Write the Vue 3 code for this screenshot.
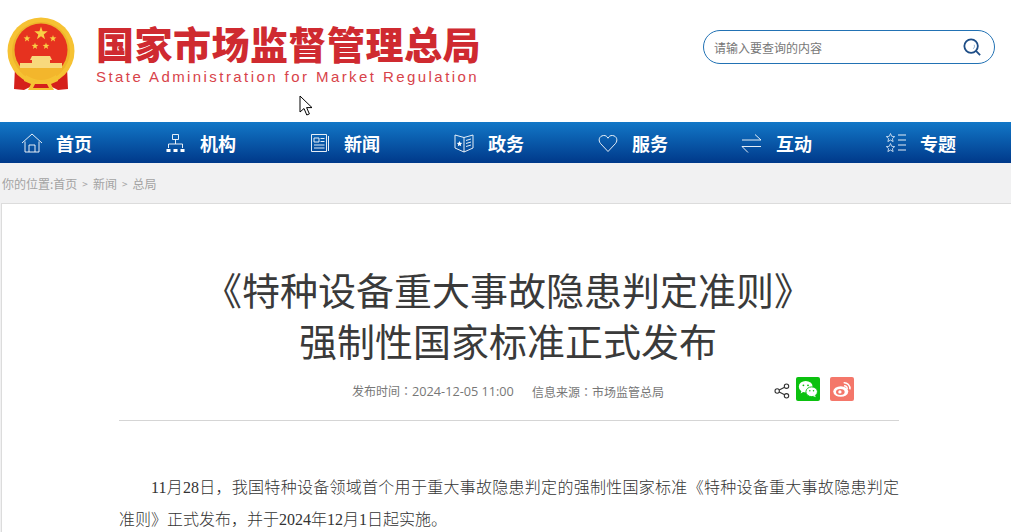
<script setup>
const navItems = [
  { label: '首页', icon: 'home' },
  { label: '机构', icon: 'org' },
  { label: '新闻', icon: 'news' },
  { label: '政务', icon: 'gov' },
  { label: '服务', icon: 'heart' },
  { label: '互动', icon: 'swap' },
  { label: '专题', icon: 'stars' },
]

// star path around a centre, used by the emblem
function star(cx, cy, r) {
  const pts = []
  for (let i = 0; i < 10; i++) {
    const rad = i % 2 ? r * 0.4 : r
    const a = -Math.PI / 2 + (i * Math.PI) / 5
    pts.push((cx + rad * Math.cos(a)).toFixed(1) + ',' + (cy + rad * Math.sin(a)).toFixed(1))
  }
  return pts.join(' ')
}
</script>

<template>
  <div class="page">
    <header class="top">
      <div class="brand">
        <svg class="emblem" viewBox="0 0 70 76" width="70" height="76">
          <path d="M9 50L8 72l10 1 6-3 8 3h6l8-3 6 3 10-1-1-22-10 14H19z" fill="#d5201b" />
          <circle cx="35" cy="34" r="33.500" fill="#f6c233" />
          <circle cx="35" cy="34" r="29" fill="#eeb52a" />
          <circle cx="35" cy="33" r="26.500" fill="#e6321f" />
          <polygon :points="star(35, 16.500, 7)" fill="#f9cf45" />
          <polygon :points="star(21, 21.500, 3.600)" fill="#f9cf45" />
          <polygon :points="star(47, 21.500, 3.600)" fill="#f9cf45" />
          <polygon :points="star(29, 29, 3.600)" fill="#f9cf45" />
          <polygon :points="star(40, 29, 3.600)" fill="#f9cf45" />
          <path d="M26 39h18l2 4h-2v3h12v5H14v-5h12v-3h-2z" fill="#f8d97c" />
          <path d="M14 51h42v3a26 26 0 0 1-42 0z" fill="#f3b62c" />
          <path d="M20 58q15 10 30 0l2 6-7 3 3 6H22l3-6-7-3z" fill="#f6c233" />
          <path d="M29 67h12l2 4H27z" fill="#d5201b" />
        </svg>
        <div class="brand-text">
          <div class="brand-cn">国家市场监督管理总局</div>
          <div class="brand-en">State Administration for Market Regulation</div>
        </div>
      </div>
      <div class="search">
        <span class="search-hint">请输入要查询的内容</span>
        <svg viewBox="0 0 20 20" width="18" height="18">
          <circle cx="9" cy="9" r="7.500" fill="none" stroke="#1d4d86" stroke-width="2" />
          <path d="M14.400 14.400L19 19" stroke="#1d4d86" stroke-width="2" />
          <path d="M12.500 7.500a4 4 0 0 1-1 4.500" fill="none" stroke="#8fb0d0" stroke-width="1" />
        </svg>
      </div>
    </header>

    <nav class="nav">
      <a v-for="item in navItems" :key="item.label" class="nav-item">
        <svg class="nav-icon" viewBox="0 0 22 22" width="22" height="22" fill="none" stroke="#fff" stroke-width="0.9">
          <template v-if="item.icon === 'home'">
            <path d="M1 11L11 2l10 9M4 9.500V20h14V9.500M8 20v-7h6v7" />
          </template>
          <template v-else-if="item.icon === 'org'">
            <path d="M7.500 2.500h6v5h-6zM10.500 7.500V12M3.500 16v-4h14v4" />
            <path d="M1.500 17h4v3h-4zM8.500 17h4v3h-4zM15.500 17h4v3h-4z" fill="#fff" stroke="none" />
          </template>
          <template v-else-if="item.icon === 'news'">
            <path d="M2.500 2.500h15v17h-15zM19.500 4v15" />
            <path d="M5 6h5v4H5z" />
            <path d="M11.500 6.500h4M11.500 9.500h4M5 13h10.500M5 16h10.500" />
          </template>
          <template v-else-if="item.icon === 'gov'">
            <path d="M2 3l9 2.500L20 3v13l-9 4-9-4zM11 5.500V20" />
            <polygon points="6.500,9 7.300,10.800 9.200,11 7.800,12.300 8.200,14.200 6.500,13.200 4.800,14.200 5.200,12.300 3.800,11 5.700,10.800" fill="#fff" stroke="none" />
            <path d="M13 8.500l5-1.500M13 11.500l5-1.500M13 14.500l5-1.500" />
          </template>
          <template v-else-if="item.icon === 'heart'">
            <path d="M11 19.500L3.500 11.500C1 8.500 2 4 6.500 3.500c2.300-.2 3.600 1 4.500 2.700.9-1.700 2.200-2.900 4.500-2.700C20 4 21 8.500 18.500 11.500z" />
          </template>
          <template v-else-if="item.icon === 'swap'">
            <path d="M1 8h19L14 2.500M20 14.500H1l6 6" />
          </template>
          <template v-else>
            <path d="M5.500 1.500l1.200 2.800 3 .3-2.300 2 .7 3-2.600-1.600-2.600 1.600.7-3-2.300-2 3-.3zM5.500 11.500l1.200 2.800 3 .3-2.300 2 .7 3-2.600-1.600-2.600 1.600.7-3-2.300-2 3-.3z" stroke="#cfe0f2" />
            <path d="M13 3h8M13 8h8M13 13h8M13 18h8" />
          </template>
        </svg>
        <span class="nav-label">{{ item.label }}</span>
      </a>
    </nav>

    <main class="body">
      <div class="crumbs">
        <span>你的位置:首页</span><i>&gt;</i><span>新闻</span><i>&gt;</i><span>总局</span>
      </div>
      <article class="card">
        <h1 class="title">《特种设备重大事故隐患判定准则》<br />强制性国家标准正式发布</h1>
        <div class="meta">
          <span>发布时间<b class="colon">：</b><span class="date">2024-12-05 11:00</span></span>
          <span class="source">信息来源<b class="colon">：</b>市场监管总局</span>
          <div class="share">
            <svg class="share-icon" viewBox="0 0 16 16" width="16" height="16" fill="none" stroke="#333" stroke-width="1.100">
              <circle cx="12.500" cy="3.200" r="2.200" />
              <circle cx="3.200" cy="8" r="2.200" />
              <circle cx="12.500" cy="12.800" r="2.200" />
              <path d="M5.200 7l5.400-2.800M5.200 9l5.400 2.800" />
            </svg>
            <span class="badge wechat">
              <svg viewBox="0 0 24 24" width="22" height="22">
                <ellipse cx="9.500" cy="9.500" rx="7.500" ry="6.300" fill="#fff" />
                <path d="M5 13.500l-1 3.300 3.500-2z" fill="#fff" />
                <ellipse cx="16" cy="15" rx="6.300" ry="5.300" fill="#fff" stroke="#0bc10f" stroke-width="1" />
                <path d="M19.500 18.500l1 2.500-3-1.500z" fill="#fff" />
                <circle cx="7" cy="8" r="1" fill="#0bc10f" />
                <circle cx="12" cy="8" r="1" fill="#0bc10f" />
                <circle cx="14" cy="14" r=".8" fill="#0bc10f" />
                <circle cx="18" cy="14" r=".8" fill="#0bc10f" />
              </svg>
            </span>
            <span class="badge weibo">
              <svg viewBox="0 0 24 24" width="20" height="20">
                <ellipse cx="10.500" cy="15" rx="9" ry="6.300" fill="#fff" />
                <ellipse cx="10" cy="15.500" rx="5.200" ry="3.600" fill="#f4776a" />
                <circle cx="9.500" cy="15.500" r="2" fill="#fff" />
                <path d="M14 4.500a7 7 0 0 1 7.500 8M14.500 8a3.500 3.500 0 0 1 3.700 4" fill="none" stroke="#fff" stroke-width="1.800" />
              </svg>
            </span>
          </div>
        </div>
        <div class="content">
          <p>11月28日，我国特种设备领域首个用于重大事故隐患判定的强制性国家标准《特种设备重大事故隐患判定准则》正式发布，并于2024年12月1日起实施。</p>
        </div>
      </article>
    </main>

    <svg class="cursor" viewBox="0 0 14 22" width="14" height="22">
      <path d="M1 1v16l4-3.500 2.800 6.500 2.600-1.100-2.800-6.300H13z" fill="#fff" stroke="#000" stroke-width="1" />
    </svg>
  </div>
</template>

<style scoped>
.page {
  position: relative;
  height: 532px;
  overflow: hidden;
  background: #fff;
  font-family: "Noto Sans CJK SC", "Liberation Sans", sans-serif;
}

.top {
  display: flex;
  justify-content: space-between;
  align-items: flex-start;
  height: 122px;
  padding: 17px 16px 0 6px;
  box-sizing: border-box;
}

.brand {
  display: flex;
  gap: 20px;
}

.brand-text {
  padding-top: 6px;
}

.brand-cn {
  font-size: 38px;
  font-weight: 900;
  line-height: 40px;
  letter-spacing: 0.5px;
  color: #cf2a30;
  white-space: nowrap;
}

.brand-en {
  margin-top: 5px;
  font-family: "Liberation Sans", sans-serif;
  font-size: 15px;
  line-height: 18px;
  letter-spacing: 2.430px;
  color: #d8434a;
  white-space: nowrap;
}

.search {
  display: flex;
  justify-content: space-between;
  align-items: center;
  width: 292px;
  height: 34px;
  margin-top: 13px;
  padding: 0 13px 0 10px;
  box-sizing: border-box;
  border: 1px solid #2272b4;
  border-radius: 17px;
}

.search-hint {
  font-size: 12px;
  color: #777;
}

.nav {
  display: flex;
  height: 41px;
  padding-left: 21px;
  background: linear-gradient(#1277c7, #00398a);
}

.nav-item {
  display: flex;
  align-items: center;
  gap: 13px;
  width: 144px;
  flex: none;
}

.nav-label {
  font-size: 18px;
  font-weight: 700;
  color: #fff;
}

.body {
  background: #f1f1f2;
}

.crumbs {
  display: flex;
  align-items: center;
  height: 40px;
  padding-left: 2px;
  font-size: 12px;
  color: #a3a3a3;
}

.crumbs i {
  margin: 0 5px;
  font-style: normal;
  font-size: 10px;
}

.card {
  margin-left: 1px;
  height: 329px;
  padding: 59px 112px 0 117px;
  background: #fff;
  border-top: 1px solid #dcdcdc;
  border-left: 1px solid #dcdcdc;
}

.title {
  margin: 0;
  padding-right: 2px;
  font-size: 38px;
  font-weight: 400;
  line-height: 51px;
  text-align: center;
  color: #3a3a3a;
}

.meta {
  display: flex;
  align-items: center;
  height: 32px;
  margin-top: 10px;
  padding: 0 45px 13px 233px;
  border-bottom: 1px solid #d5d5d5;
  font-size: 12px;
  color: #777;
}

.colon {
  font-family: "Noto Sans CJK TC", sans-serif;
  font-weight: 400;
}

.date {
  font-family: "Open Sans", sans-serif;
  font-size: 12.700px;
}

.source {
  margin-left: 18px;
}

.share {
  display: flex;
  align-items: center;
  margin-left: auto;
  margin-bottom: 4px;
}

.share-icon {
  margin-top: 4px;
  margin-right: 6px;
}

.badge {
  display: flex;
  align-items: center;
  justify-content: center;
  width: 24px;
  height: 24px;
  border-radius: 2px;
}

.weibo {
  margin-left: 10px;
  background: #f4776a;
}

.wechat {
  background: #0bc10f;
}

.content {
  margin-top: 51px;
  font-family: "Liberation Serif", "Noto Sans CJK SC", serif;
  font-size: 16px;
  font-weight: 300;
  line-height: 32px;
  color: #333;
}

.content p {
  margin: 0;
  text-indent: 32px;
  text-align: justify;
}

.cursor {
  position: absolute;
  left: 299px;
  top: 95px;
}
</style>
